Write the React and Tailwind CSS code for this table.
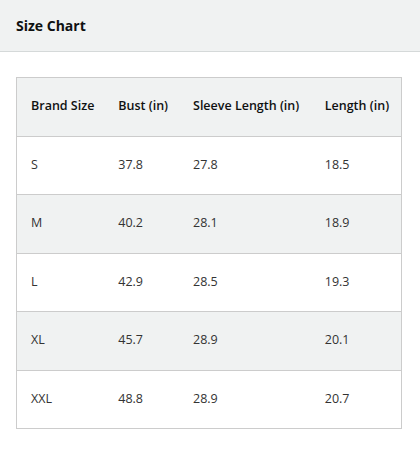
import React from "react";

const rows = [
  ["S", "37.8", "27.8", "18.5"],
  ["M", "40.2", "28.1", "18.9"],
  ["L", "42.9", "28.5", "19.3"],
  ["XL", "45.7", "28.9", "20.1"],
  ["XXL", "48.8", "28.9", "20.7"],
];

const widths = ["w-[88px]", "w-[75px]", "w-[132px]", "w-[91px]"];

const App = () => {
  return (
    <div className="w-[420px] h-[450px] bg-white text-[#0f1111] font-['Open_Sans',sans-serif]">
      {/* Header */}
      <div className="h-[52px] bg-[#f0f2f2] border-b border-[#d5d9d9] flex items-center px-4">
        <h2 className="text-[14px] font-bold">Size Chart</h2>
      </div>

      {/* Table */}
      <div className="px-4 pt-[25px]">
        <table className="w-[386px] border-collapse border border-[#cccccc] text-[12.5px]">
          <thead>
            <tr className="bg-[#f0f2f2] h-[58.5px]">
              {["Brand Size", "Bust (in)", "Sleeve Length (in)", "Length (in)"].map((h, i) => (
                <th key={h} className={`${widths[i]} text-left font-semibold pl-[14px] pr-0 whitespace-nowrap`}>
                  {h}
                </th>
              ))}
            </tr>
          </thead>
          <tbody>
            {rows.map((r, idx) => (
              <tr
                key={r[0]}
                className={`h-[58.5px] border-t border-[#cccccc] ${idx % 2 === 1 ? "bg-[#f0f2f2]" : "bg-white"}`}
              >
                {r.map((c, i) => (
                  <td key={i} className="pl-[14px] text-[#333]">
                    {c}
                  </td>
                ))}
              </tr>
            ))}
          </tbody>
        </table>
      </div>
    </div>
  );
};

export default App;
